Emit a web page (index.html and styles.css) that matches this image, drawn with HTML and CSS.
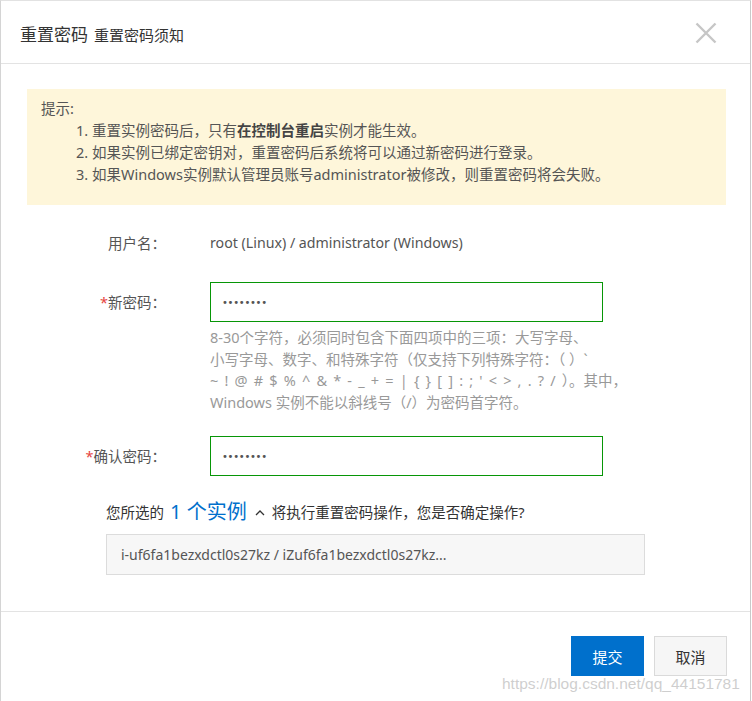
FILE: index.html
```html
<!DOCTYPE html>
<html lang="zh-CN">
<head>
<meta charset="utf-8">
<title>重置密码</title>
<link rel="stylesheet" href="styles.css">
</head>
<body>
<div class="modal">
  <div class="header">
    <div class="title"><span class="t-main">重置密码</span><span class="t-sub">重置密码须知</span></div>
    <button class="close" aria-label="关闭">
      <svg width="22" height="22" viewBox="0 0 22 22"><path d="M1.5 1.5 L20.5 20.5 M20.5 1.5 L1.5 20.5" stroke="#c6c6c6" stroke-width="2.4" fill="none"/></svg>
    </button>
  </div>
  <div class="body">
    <div class="tips">
      <div class="tips-title">提示:</div>
      <ol class="tips-list">
        <li>1. 重置实例密码后，只有<b>在控制台重启</b>实例才能生效。</li>
        <li>2. 如果实例已绑定密钥对，重置密码后系统将可以通过新密码进行登录。</li>
        <li>3. 如果Windows实例默认管理员账号administrator被修改，则重置密码将会失败。</li>
      </ol>
    </div>
    <div class="form">
      <div class="row row-user">
        <label class="label">用户名：</label>
        <div class="value">root (Linux) / administrator (Windows)</div>
      </div>
      <div class="row row-input">
        <label class="label"><span class="req">*</span>新密码：</label>
        <div class="field">
          <input class="input" type="password" value="abcdefgh">
          <div class="hint">8-30个字符，必须同时包含下面四项中的三项：大写字母、<br>小写字母、数字、和特殊字符（仅支持下列特殊字符：（ ）`<br><span class="symbols">~ ! @ # $ % ^ &amp; * - _ + = | { } [ ] : ; ' &lt; &gt; , . ? / </span>）。其中，<br>Windows 实例不能以斜线号（/）为密码首字符。</div>
        </div>
      </div>
      <div class="row row-input row-confirm-pw">
        <label class="label"><span class="req">*</span>确认密码：</label>
        <div class="field">
          <input class="input" type="password" value="abcdefgh">
        </div>
      </div>
    </div>
    <div class="confirm">
      您所选的<a class="count">1 个实例</a><svg class="caret" width="10" height="7" viewBox="0 0 10 7"><path d="M1 6 L5 2 L9 6" stroke="#333" stroke-width="1.3" fill="none"/></svg>将执行重置密码操作，您是否确定操作?
    </div>
    <div class="instances">i-uf6fa1bezxdctl0s27kz / iZuf6fa1bezxdctl0s27kz...</div>
  </div>
  <div class="footer">
    <button class="btn btn-primary">提交</button>
    <button class="btn btn-default">取消</button>
  </div>
  <div class="watermark">https://blog.csdn.net/qq_44151781</div>
</div>
</body>
</html>
```

FILE: styles.css
```css
html, body {
  margin: 0;
  padding: 0;
  background: #ffffff;
}

body {
  font-family: "Noto Sans", "Noto Sans CJK SC", sans-serif;
  color: #333;
}

.modal {
  position: relative;
  box-sizing: border-box;
  width: 751px;
  height: 701px;
  border-top: 1px solid #e2e2e2;
  border-left: 1px solid #d4d4d4;
  border-right: 1px solid #c9c9c9;
  background: #fff;
}

.header {
  height: 62px;
  border-bottom: 1px solid #e3e3e3;
  display: flex;
  align-items: center;
  justify-content: space-between;
  padding: 0 33px 0 19px;
}

.title {
  display: flex;
  align-items: baseline;
  gap: 6px;
  margin-top: 2px;
}

.t-main {
  font-size: 17px;
  color: #333;
}

.t-sub {
  font-size: 15px;
  color: #333;
}

.close {
  border: 0;
  background: none;
  padding: 0;
  width: 22px;
  height: 22px;
  display: flex;
  margin-top: 2px;
}

.body {
  padding: 25px 24px 36px 26px;
}

.tips {
  background: #fef6da;
  height: 116px;
  box-sizing: border-box;
  padding: 8px 14px 0 14px;
  font-size: 14.5px;
  line-height: 22px;
  color: #555;
}

.tips-title {
  font-size: 14.5px;
}

.tips-list {
  list-style: none;
  margin: 0;
  padding: 0 0 0 35px;
}

.tips-list b {
  font-weight: 600;
  color: #444;
}

.form {
  margin-top: 27px;
}

.row {
  display: flex;
  align-items: flex-start;
}

.label {
  width: 139px;
  margin-right: 44px;
  text-align: right;
  font-size: 14.5px;
  color: #555;
  flex-shrink: 0;
}

.req {
  color: #e64340;
}

.row-user .label,
.row-user .value {
  line-height: 22px;
}

.value {
  font-size: 14.2px;
  color: #555;
}

.row-input {
  margin-top: 28px;
}

.row-input .label {
  line-height: 40px;
}

.row-confirm-pw {
  margin-top: 23px;
}

.field {
  width: 393px;
}

.input {
  display: block;
  box-sizing: border-box;
  width: 393px;
  height: 40px;
  border: 1px solid #079607;
  outline: none;
  margin: 0;
  padding: 0 11px;
  font-size: 10px;
  letter-spacing: -0.3px;
  color: #555;
  background: #fff;
  font-family: "DejaVu Sans", sans-serif;
}

.hint {
  margin-top: 5px;
  font-size: 14.5px;
  line-height: 21.5px;
  color: #999;
  white-space: nowrap;
}

.symbols {
  word-spacing: 2.4px;
}

.confirm {
  margin-top: 24px;
  padding-left: 79px;
  font-size: 14.5px;
  line-height: 24px;
  color: #333;
  display: flex;
  align-items: center;
  white-space: nowrap;
}

.count {
  color: #0070cc;
  font-size: 20px;
  margin: 0 6px 0 6px;
  text-decoration: none;
}

.caret {
  margin: 0 7px 0 2px;
}

.instances {
  margin-top: 10px;
  margin-left: 79px;
  box-sizing: border-box;
  width: 539px;
  height: 41px;
  background: #f7f7f7;
  border: 1px solid #dcdcdc;
  padding: 0 14px;
  font-size: 14px;
  line-height: 39px;
  color: #555;
}

.footer {
  border-top: 1px solid #e3e3e3;
  padding: 24px 23px 0 0;
  display: flex;
  justify-content: flex-end;
  gap: 10px;
}

.btn {
  box-sizing: border-box;
  width: 73px;
  height: 40px;
  font-family: "Noto Sans CJK SC", sans-serif;
  font-size: 15px;
  padding: 0;
  cursor: pointer;
}

.btn-primary {
  background: #0070cc;
  color: #fff;
  border: 0;
}

.btn-default {
  background: #f6f6f6;
  color: #333;
  border: 1px solid #dadada;
}

.watermark {
  position: absolute;
  left: 501px;
  top: 672px;
  font-family: "Liberation Sans", Arial, sans-serif;
  font-size: 15.5px;
  line-height: 22px;
  color: rgba(190, 190, 190, 0.75);
  pointer-events: none;
  white-space: nowrap;
}
```
